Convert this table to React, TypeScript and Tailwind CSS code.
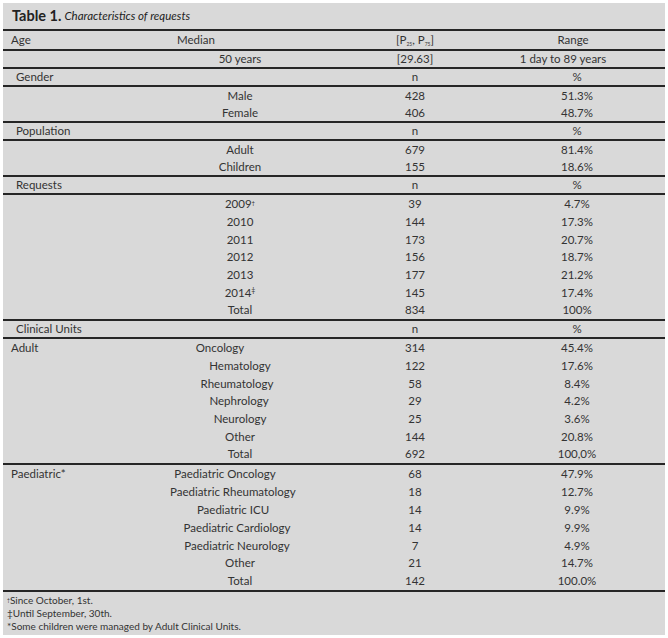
import React from 'react';

type Row = {
  c1?: React.ReactNode;
  c2?: React.ReactNode;
  c3?: React.ReactNode;
  c4?: React.ReactNode;
  s1?: string;
  s2?: string;
  s4?: string;
};

const Line = () => <div className="h-[2px] bg-[#262626]" />;

const Dagger = () => <sup className="text-[6px]">†</sup>;
const DDagger = () => <sup className="text-[7px]">‡</sup>;

const TableRow = ({ r }: { r: Row }) => (
  <div className="flex-1 grid grid-cols-[167px_140px_190px_154px] items-center whitespace-nowrap">
    <div className={`pl-[8px] ${r.s1 ?? ''}`}>{r.c1}</div>
    <div className={`text-center ${r.s2 ?? ''}`}>{r.c2}</div>
    <div className="text-center pl-[20px]">{r.c3}</div>
    <div className={`text-center ${r.s4 ?? ''}`}>{r.c4}</div>
  </div>
);

const Group = ({ h, rows }: { h: string; rows: Row[] }) => (
  <div className={`flex flex-col ${h}`}>
    {rows.map((r, i) => (
      <TableRow key={i} r={r} />
    ))}
  </div>
);

const section = (name: string): Row => ({ c1: name, c3: 'n', c4: '%', s1: 'pl-[13px]' });

export default function App() {
  return (
    <div className="bg-white min-h-screen pt-[3px] pl-[3px]">
      <div className="w-[662px] h-[632px] bg-[#d9d9d9] text-[#333] text-[11.5px] leading-none flex flex-col font-['Lato','Liberation_Sans',sans-serif]">
        <div className="h-[26px] flex items-center pl-[9px] gap-[3px] text-[#222]">
          <span className="font-bold text-[14.5px]">Table 1.</span>
          <span className="italic text-[11.5px]">Characteristics of requests</span>
        </div>
        <Line />
        <Group
          h="h-[18px]"
          rows={[
            {
              c1: 'Age',
              c2: 'Median',
              s2: 'pr-[88px]',
              c3: (
                <span>
                  [P<sub className="text-[5px]">25</sub>, P<sub className="text-[5px]">75</sub>]
                </span>
              ),
              c4: 'Range',
              s4: 'pr-[8px]',
            },
          ]}
        />
        <Line />
        <Group h="h-[16px]" rows={[{ c2: '50 years', c3: '[29.63]', c4: '1 day to 89 years', s4: 'pr-[28px]' }]} />
        <Line />
        <Group h="h-[16px]" rows={[section('Gender')]} />
        <Line />
        <Group
          h="h-[34px]"
          rows={[
            { c2: 'Male', c3: '428', c4: '51.3%' },
            { c2: 'Female', c3: '406', c4: '48.7%' },
          ]}
        />
        <Line />
        <Group h="h-[16px]" rows={[section('Population')]} />
        <Line />
        <Group
          h="h-[34px]"
          rows={[
            { c2: 'Adult', c3: '679', c4: '81.4%' },
            { c2: 'Children', c3: '155', c4: '18.6%' },
          ]}
        />
        <Line />
        <Group h="h-[16px]" rows={[section('Requests')]} />
        <Line />
        <Group
          h="h-[124px]"
          rows={[
            { c2: <span>2009<Dagger /></span>, c3: '39', c4: '4.7%' },
            { c2: '2010', c3: '144', c4: '17.3%' },
            { c2: '2011', c3: '173', c4: '20.7%' },
            { c2: '2012', c3: '156', c4: '18.7%' },
            { c2: '2013', c3: '177', c4: '21.2%' },
            { c2: <span>2014<DDagger /></span>, c3: '145', c4: '17.4%' },
            { c2: 'Total', c3: '834', c4: '100%' },
          ]}
        />
        <Line />
        <Group h="h-[16px]" rows={[section('Clinical Units')]} />
        <Line />
        <Group
          h="h-[124px]"
          rows={[
            { c1: 'Adult', c2: 'Oncology', s2: 'pr-[40px]', c3: '314', c4: '45.4%' },
            { c2: 'Hematology', c3: '122', c4: '17.6%' },
            { c2: 'Rheumatology', s2: 'pr-[6px]', c3: '58', c4: '8.4%' },
            { c2: 'Nephrology', s2: 'pr-[2px]', c3: '29', c4: '4.2%' },
            { c2: 'Neurology', c3: '25', c4: '3.6%' },
            { c2: 'Other', c3: '144', c4: '20.8%' },
            { c2: 'Total', c3: '692', c4: '100,0%' },
          ]}
        />
        <Line />
        <Group
          h="h-[125px]"
          rows={[
            { c1: 'Paediatric*', c2: 'Paediatric Oncology', s2: 'pr-[30px]', c3: '68', c4: '47.9%' },
            { c2: 'Paediatric Rheumatology', s2: 'pr-[16px]', c3: '18', c4: '12.7%' },
            { c2: 'Paediatric ICU', s2: 'pr-[14px]', c3: '14', c4: '9.9%' },
            { c2: 'Paediatric Cardiology', s2: 'pr-[6px]', c3: '14', c4: '9.9%' },
            { c2: 'Paediatric Neurology', s2: 'pr-[6px]', c3: '7', c4: '4.9%' },
            { c2: 'Other', c3: '21', c4: '14.7%' },
            { c2: 'Total', c3: '142', c4: '100.0%' },
          ]}
        />
        <Line />
        <div className="flex flex-col pl-[4px] pt-[3px] gap-[3px] text-[10px] leading-[10px]">
          <div>
            <sup className="text-[5px]">†</sup>Since October, 1st.
          </div>
          <div>‡Until September, 30th.</div>
          <div>*Some children were managed by Adult Clinical Units.</div>
        </div>
      </div>
    </div>
  );
}
